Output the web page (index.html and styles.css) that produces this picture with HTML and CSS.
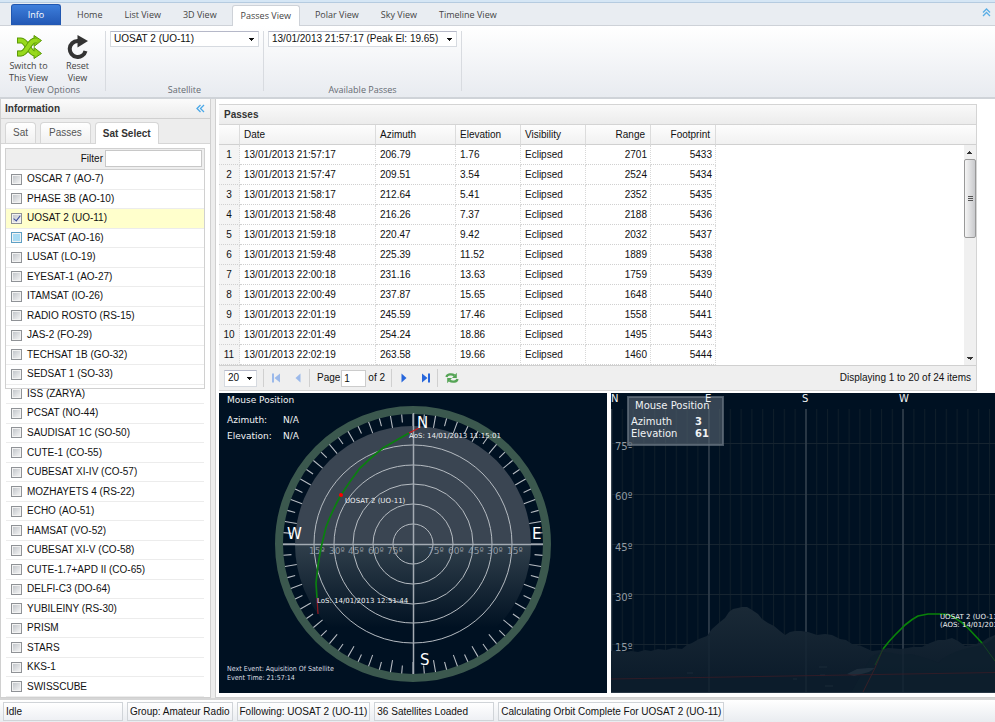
FILE: index.html
```html
<!DOCTYPE html>
<html lang="en">
<head>
<meta charset="utf-8">
<title>Passes View</title>
<link rel="stylesheet" href="styles.css">
</head>
<body>
<header class="ribbon">
  <nav class="ribbon-tabs">
    <button class="tab info">Info</button>
    <button class="tab">Home</button>
    <button class="tab">List View</button>
    <button class="tab">3D View</button>
    <button class="tab active">Passes View</button>
    <button class="tab">Polar View</button>
    <button class="tab">Sky View</button>
    <button class="tab">Timeline View</button>
    <button class="collapse" aria-label="Collapse ribbon"><svg width="9" height="9" viewBox="0 0 9 9"><path d="M1 4.5 4.5 1 8 4.5M1 8 4.500 4.500 8 8" fill="none" stroke="#5aaee6" stroke-width="1.300"/></svg></button>
  </nav>
  <div class="ribbon-body">
    <section class="group options">
      <div class="group-items">
        <button class="big">
          <svg width="26" height="24" viewBox="0 0 26 24"><g fill="none" stroke="#5c9a08" stroke-width="6"><path d="M1 5.500H5C11 5.500 13 18.500 19 18.500H20"/><path d="M1 18.500H5C11 18.500 13 5.500 19 5.500H20"/></g><path d="M18 .5 25.500 5.500 18 11.500ZM18 12.500 25.500 18.500 18 23.500Z" fill="#8fd014" stroke="#5c9a08"/><g fill="none" stroke="#98d91c" stroke-width="4"><path d="M2 5.500H5C11 5.500 13 18.500 19 18.500H21"/></g><path d="M2 18.500H5C11 18.500 13 5.500 19 5.500H21" fill="none" stroke="#5c9a08" stroke-width="5.500"/><path d="M2 18.500H5C11 18.500 13 5.500 19 5.500H21" fill="none" stroke="#98d91c" stroke-width="4"/></svg>
          <span>Switch to<br>This View</span>
        </button>
        <button class="big">
          <svg width="26" height="24" viewBox="0 0 26 24"><path d="M14 6H12.500A8 8 0 1 0 20.500 16" fill="none" stroke="#333" stroke-width="4"/><path d="M12.500 0 23 6 12.500 12.500Z" fill="#333"/></svg>
          <span>Reset<br>View</span>
        </button>
      </div>
      <h2>View Options</h2>
    </section>
    <section class="group satellite">
      <div class="group-items"><select class="combo" aria-label="Satellite"><option>UOSAT 2 (UO-11)</option></select></div>
      <h2>Satellite</h2>
    </section>
    <section class="group passes">
      <div class="group-items"><select class="combo" aria-label="Available Passes"><option>13/01/2013 21:57:17 (Peak El: 19.65)</option></select></div>
      <h2>Available Passes</h2>
    </section>
  </div>
</header>

<div class="workspace">
  <aside class="side">
    <div class="panel-title"><h1>Information</h1><button class="collapse-side" aria-label="Collapse panel"><svg width="9" height="9" viewBox="0 0 9 9"><path d="M4.500 1 1 4.500 4.500 8M8 1 4.500 4.500 8 8" fill="none" stroke="#4aa8e8" stroke-width="1.300"/></svg></button></div>
    <div class="side-tabs"><button>Sat</button><button>Passes</button><button class="active">Sat Select</button></div>
    <div class="select-box">
      <div class="filter"><label for="filter">Filter</label><input id="filter" type="text"></div>
      <div class="sat-list">
        <label><input type="checkbox">OSCAR 7 (AO-7)</label>
        <label><input type="checkbox">PHASE 3B (AO-10)</label>
        <label class="selected"><input type="checkbox" checked>UOSAT 2 (UO-11)</label>
        <label class="hot"><input type="checkbox">PACSAT (AO-16)</label>
        <label><input type="checkbox">LUSAT (LO-19)</label>
        <label><input type="checkbox">EYESAT-1 (AO-27)</label>
        <label><input type="checkbox">ITAMSAT (IO-26)</label>
        <label><input type="checkbox">RADIO ROSTO (RS-15)</label>
        <label><input type="checkbox">JAS-2 (FO-29)</label>
        <label><input type="checkbox">TECHSAT 1B (GO-32)</label>
        <label><input type="checkbox">SEDSAT 1 (SO-33)</label>
        <label><input type="checkbox">ISS (ZARYA)</label>
        <label><input type="checkbox">PCSAT (NO-44)</label>
        <label><input type="checkbox">SAUDISAT 1C (SO-50)</label>
        <label><input type="checkbox">CUTE-1 (CO-55)</label>
        <label><input type="checkbox">CUBESAT XI-IV (CO-57)</label>
        <label><input type="checkbox">MOZHAYETS 4 (RS-22)</label>
        <label><input type="checkbox">ECHO (AO-51)</label>
        <label><input type="checkbox">HAMSAT (VO-52)</label>
        <label><input type="checkbox">CUBESAT XI-V (CO-58)</label>
        <label><input type="checkbox">CUTE-1.7+APD II (CO-65)</label>
        <label><input type="checkbox">DELFI-C3 (DO-64)</label>
        <label><input type="checkbox">YUBILEINY (RS-30)</label>
        <label><input type="checkbox">PRISM</label>
        <label><input type="checkbox">STARS</label>
        <label><input type="checkbox">KKS-1</label>
        <label><input type="checkbox">SWISSCUBE</label>
      </div>
    </div>
  </aside>

  <main class="main">
    <section class="grid-panel">
      <div class="grid-title"><h1>Passes</h1></div>
      <div class="grid-body">
        <table>
          <colgroup><col class="c-num"><col class="c-date"><col class="c-az"><col class="c-std"><col class="c-std"><col class="c-std"><col class="c-std"><col></colgroup>
          <thead><tr><th></th><th>Date</th><th>Azimuth</th><th>Elevation</th><th>Visibility</th><th class="r">Range</th><th class="r">Footprint</th><th></th></tr></thead>
          <tbody>
            <tr><td>1</td><td>13/01/2013 21:57:17</td><td>206.79</td><td>1.76</td><td>Eclipsed</td><td class="r">2701</td><td class="r">5433</td><td></td></tr>
            <tr><td>2</td><td>13/01/2013 21:57:47</td><td>209.51</td><td>3.54</td><td>Eclipsed</td><td class="r">2524</td><td class="r">5434</td><td></td></tr>
            <tr><td>3</td><td>13/01/2013 21:58:17</td><td>212.64</td><td>5.41</td><td>Eclipsed</td><td class="r">2352</td><td class="r">5435</td><td></td></tr>
            <tr><td>4</td><td>13/01/2013 21:58:48</td><td>216.26</td><td>7.37</td><td>Eclipsed</td><td class="r">2188</td><td class="r">5436</td><td></td></tr>
            <tr><td>5</td><td>13/01/2013 21:59:18</td><td>220.47</td><td>9.42</td><td>Eclipsed</td><td class="r">2032</td><td class="r">5437</td><td></td></tr>
            <tr><td>6</td><td>13/01/2013 21:59:48</td><td>225.39</td><td>11.52</td><td>Eclipsed</td><td class="r">1889</td><td class="r">5438</td><td></td></tr>
            <tr><td>7</td><td>13/01/2013 22:00:18</td><td>231.16</td><td>13.63</td><td>Eclipsed</td><td class="r">1759</td><td class="r">5439</td><td></td></tr>
            <tr><td>8</td><td>13/01/2013 22:00:49</td><td>237.87</td><td>15.65</td><td>Eclipsed</td><td class="r">1648</td><td class="r">5440</td><td></td></tr>
            <tr><td>9</td><td>13/01/2013 22:01:19</td><td>245.59</td><td>17.46</td><td>Eclipsed</td><td class="r">1558</td><td class="r">5441</td><td></td></tr>
            <tr><td>10</td><td>13/01/2013 22:01:49</td><td>254.24</td><td>18.86</td><td>Eclipsed</td><td class="r">1495</td><td class="r">5443</td><td></td></tr>
            <tr><td>11</td><td>13/01/2013 22:02:19</td><td>263.58</td><td>19.66</td><td>Eclipsed</td><td class="r">1460</td><td class="r">5444</td><td></td></tr>
          </tbody>
        </table>
        <div class="scrollbar"><span class="up"></span><span class="thumb"></span><span class="down"></span></div>
      </div>
      <div class="pager">
        <select class="combo size" aria-label="Page size"><option>20</option></select>
        <i></i>
        <button aria-label="First page"><svg width="10" height="10" viewBox="0 0 10 10"><path d="M1 .5H3V9.500H1ZM9 .5V9.500L3.500 5Z" fill="#9bb9ea"/></svg></button>
        <button aria-label="Previous page"><svg width="10" height="10" viewBox="0 0 10 10"><path d="M7.500 .5V9.500L2.500 5Z" fill="#9bb9ea"/></svg></button>
        <i></i>
        <label for="page">Page</label><input id="page" type="text" value="1"><span>of 2</span>
        <i></i>
        <button aria-label="Next page"><svg width="10" height="10" viewBox="0 0 10 10"><path d="M2.500 .5V9.500L7.500 5Z" fill="#2767dc"/></svg></button>
        <button aria-label="Last page"><svg width="10" height="10" viewBox="0 0 10 10"><path d="M9 .5H7V9.500H9ZM1 .5V9.500L6.500 5Z" fill="#2767dc"/></svg></button>
        <i></i>
        <button aria-label="Refresh"><svg width="14" height="12" viewBox="0 0 14 12"><g fill="none" stroke="#55a455" stroke-width="2.300"><path d="M1.500 5C2 2 7 1.500 9.500 3.500"/><path d="M12.500 7C12 10 7 10.500 4.500 8.500"/></g><path d="M11.800 .8V6H7ZM2.200 11.200V6H7Z" fill="#55a455"/></svg></button>
        <span class="count">Displaying 1 to 20 of 24 items</span>
      </div>
    </section>
    <div class="views">
      <svg class="polar" viewBox="0 0 388 300" preserveAspectRatio="xMinYMin slice">
        <defs><linearGradient id="disc" gradientUnits="userSpaceOnUse" x1="0" y1="150" x2="0" y2="235"><stop offset="0" stop-color="#3a4552"/><stop offset=".02" stop-color="#303f4b"/><stop offset="1" stop-color="#001122"/></linearGradient></defs>
        <circle cx="194" cy="151" r="118" fill="url(#disc)"/>
        <circle cx="194" cy="151" r="134" fill="none" stroke="#3b584e" stroke-width="8"/>
        <g fill="none" stroke="#b6bcc2">
          <circle cx="194" cy="151" r="124" stroke-width="12" pathLength="360" stroke-dasharray=".5 9.500" stroke-dashoffset=".25"/>
          <circle cx="194" cy="151" r="126" stroke-width="8" pathLength="360" stroke-dasharray=".5 9.500" stroke-dashoffset="5.250"/>
          <circle cx="194" cy="151" r="20"/><circle cx="194" cy="151" r="40"/><circle cx="194" cy="151" r="60"/><circle cx="194" cy="151" r="79"/><circle cx="194" cy="151" r="99"/>
          <path d="M194.500 20V281M64 151.500H324" stroke-width="1.500" stroke="#a4abb3"/>
        </g>
        <g class="deg"><text x="90" y="161">15º</text><text x="110" y="161">30º</text><text x="129" y="161">45º</text><text x="149" y="161">60º</text><text x="168" y="161">75º</text><text x="209" y="161">75º</text><text x="229" y="161">60º</text><text x="249" y="161">45º</text><text x="268" y="161">30º</text><text x="288" y="161">15º</text></g>
        <path d="M190 40 164 55 153 64 141 75Q131 88 122 102 113 118 107 134L102 155 99 172 97 190 98 205" fill="none" stroke="#0a800f" stroke-width="1.700"/>
        <path d="M200 35 190 40" stroke="#d21c1c" stroke-width="1.200"/><path d="M98 205 99 221" stroke="#901820" stroke-width="1.300"/>
        <circle cx="122" cy="102" r="2" fill="#f00"/>
        <g class="compass"><text x="198" y="35">N</text><text x="201" y="272">S</text><text x="68" y="146">W</text><text x="313" y="146">E</text></g>
        <g class="tiny"><text x="190" y="45">AoS: 14/01/2013 11:15:01</text><text x="126" y="110">UOSAT 2 (UO-11)</text><text x="98" y="210">LoS: 14/01/2013 12:51:44</text></g>
        <g class="tiny event"><text x="8" y="278">Next Event: Aquisition Of Satellite</text><text x="8" y="287">Event Time: 21:57:14</text></g>
        <g class="info-text"><text x="8" y="10">Mouse Position</text><text x="8" y="30">Azimuth:</text><text x="64" y="30">N/A</text><text x="8" y="46">Elevation:</text><text x="64" y="46">N/A</text></g>
      </svg>
      <svg class="horizon" viewBox="0 0 384 300" preserveAspectRatio="xMinYMin slice">
        <defs>
          <pattern id="minor" patternUnits="userSpaceOnUse" width="10.800" height="300"><rect x="0" width="1" height="300" fill="#0f1e2a"/></pattern>
          <linearGradient id="land" gradientUnits="userSpaceOnUse" x1="0" y1="214" x2="0" y2="285"><stop offset="0" stop-color="#1a2936"/><stop offset="1" stop-color="#0c1c2b"/></linearGradient>
        </defs>
        <rect y="16" width="400" height="284" fill="url(#minor)"/>
        <path d="M0 50.500H400M0 101.500H400M0 151.500H400M0 201.500H400M0 251.500H400" stroke="#162430"/>
        <path d="M.5 16V300M98 16V300M195 16V300M292 16V300" stroke="#35424f" stroke-width="1.500"/>
        <g class="scale"><text x="4" y="57">75º</text><text x="4" y="107">60º</text><text x="4" y="158">45º</text><text x="4" y="208">30º</text></g>
        <path d="M0 258 6 257 14 259 20 258 27 259 34 257 40 258 47 256 55 257 62 255 71 256 76 252 81 250 88 246 96 243 101 236 109 229 114 225 118 219 122 216 127 215 131 214 136 214 141 217 147 221 151 226 157 230 163 233 169 238 174 242 179 239 184 238 190 238 197 239 206 242 214 241 221 242 229 246 235 247 241 251 250 253 261 258 270 257 277 255 290 256 302 254 311 254 319 250 327 247 334 247 341 245 347 248 354 253 362 252 371 249 377 245 384 242 400 238V300H0Z" fill="url(#land)"/>
        <path d="M240 300 254 275 261 263 270 259 281 260 290 262 300 261 311 264 320 267 327 270 333 265 340 261 347 258 357 255 367 253 376 250 384 244 400 240V300Z" fill="#0e1f2d" opacity=".8"/>
        <path d="M236 281 246 276 257 275 264 275 258 279 243 283Z" fill="#1d2d3b"/>
        <path d="M98 243V300M195 240V300M292 256V300" stroke="#1b2b38"/><path d="M208 274h8m-7 8h5m-32 4h4m-110-6h6m132 13h8" stroke="#1b2b38"/>
        <path d="M0 299.500H400" stroke="#293846"/>
        <path d="M0 286 384 279.500" stroke="#381c26" stroke-width=".8"/>
        <path d="M272 256 264 275 252 299" fill="none" stroke="#382027"/><path d="M272 256 264 272M371 250 384 268" fill="none" stroke="#154423"/>
        <path d="M272 256Q278 248 284 242L294 232Q301 226 307 223L317 221H331Q338 221 344 225 351 229 357 235L371 250" fill="none" stroke="#098309" stroke-width="1.700"/>
        <g class="scale"><text x="4" y="258">15º</text></g>
        <g class="tiny"><text x="329" y="226">UOSAT 2 (UO-11)</text><text x="329" y="234">(AOS: 14/01/2013 11:15:01)</text></g>
        <rect x="17" y="4" width="95" height="48" fill="#5a6875" fill-opacity=".6" stroke="#687581" stroke-opacity=".7" stroke-width="2"/>
        <g class="cardinal"><text x="0" y="9">N</text><text x="94" y="9">E</text><text x="191" y="9">S</text><text x="288" y="9">W</text></g>
        <g class="tip"><text x="24" y="16">Mouse Position</text><text x="20" y="32">Azimuth</text><text x="84" y="32" class="bold">3</text><text x="20" y="44">Elevation</text><text x="84" y="44" class="bold">61</text></g>
      </svg>
    </div>
  </main>
</div>
<footer class="status"><span class="wide">Idle</span><span>Group: Amateur Radio</span><span>Following: UOSAT 2 (UO-11)</span><span class="wide">36 Satellites Loaded</span><span>Calculating Orbit Complete For UOSAT 2 (UO-11)</span></footer>
</body>
</html>
```
FILE: styles.css
```css
* { box-sizing: border-box; }
body {
  margin: 0;
  min-height: 100vh;
  display: flex;
  flex-direction: column;
  overflow-x: hidden;
  background: #fff;
  color: #111;
  font: 10px/14px "Liberation Sans", Arial, sans-serif;
}
h1, h2 { margin: 0; font-size: 10px; }
button { border: 0; padding: 0; background: none; font: inherit; color: inherit; }
input, select { font: inherit; color: inherit; margin: 0; }
svg { display: block; }

.ribbon { font: 9px/12px "Open Sans", "Noto Sans", sans-serif; color: #444; border-top: 2px solid #d5e6f5; }
.ribbon-tabs {
  display: flex;
  align-items: flex-end;
  height: 24px;
  padding-left: 11px;
  border-top: 1px solid #b5cbe0;
  border-bottom: 1px solid #ced2d8;
  background: #e9edf2;
}
.tab { height: 20px; padding: 0 11px; border-radius: 3px 3px 0 0; }
.tab.info { height: 21px; width: 50px; margin-right: 5px; border: 1px solid #2057b0; border-bottom: 0; background: linear-gradient(#3d7edb, #2257b4); color: #fff; }
.tab.active { height: 21px; margin: 0 4px -1px; padding: 0 8px; border: 1px solid #ced2d8; border-bottom: 0; background: #fff; }
.collapse { margin: 0 4px 8px auto; }
.ribbon-body { display: flex; height: 73px; padding-top: 5px; border-bottom: 2px solid #cfd3d8; background: linear-gradient(#fff, #e8ebf0); }
.group { display: flex; flex-direction: column; height: 60px; border-right: 1px solid #d8dbe0; }
.group h2 { margin-bottom: -5px; font-size: 9px; font-weight: 400; text-align: center; color: #666b72; }
.group-items { display: flex; flex: 1; align-items: flex-start; }
.options { width: 106px; }
.options .group-items { padding: 4px 0 0 4px; }
.satellite { width: 158px; }
.passes { width: 198px; }
.satellite .group-items, .passes .group-items { padding: 0 4px; }
.big { display: flex; flex-direction: column; align-items: center; gap: 1px; width: 49px; }
.combo {
  appearance: none;
  width: 100%;
  height: 16px;
  padding: 0 3px;
  border: 1px solid #d6dae0;
  border-top-color: #b5b8c8;
  border-radius: 0;
  background: conic-gradient(from -50deg at 50% 100%, #111 100deg, transparent 100deg) right 3px center / 7px 3px no-repeat, #fff;
  background: conic-gradient(from 0deg at 50% 100%, #111 0 50deg, transparent 50deg 310deg, #111 310deg) right 3px center / 7px 3px no-repeat, #fff;
  color: #111;
  font: 10px/14px "Liberation Sans", Arial, sans-serif;
}

.workspace { flex: 1; display: flex; gap: 4px; background: #ededed; border-bottom: 2px solid #d6d6d6; }
.side { width: 211px; flex: none; display: flex; flex-direction: column; border: 1px solid #d0d0d0; border-top: 0; background: #fff; }
.panel-title { display: flex; justify-content: space-between; align-items: center; height: 20px; padding: 0 5px 0 4px; border-bottom: 1px solid #d0d0d0; background: linear-gradient(#fbfbfb, #ececec); color: #333; }
.side-tabs { display: flex; align-items: flex-end; gap: 4px; height: 25px; padding-left: 4px; background: #ededed; border-bottom: 1px solid #d6d6d6; color: #555; }
.side-tabs button { height: 21px; padding: 0 7px; border: 1px solid #d6d6d6; border-bottom: 0; border-radius: 4px 4px 0 0; background: linear-gradient(#fff, #f0f0f0); }
.side-tabs .active { height: 22px; margin-bottom: -1px; background: #fff; color: #333; font-weight: 700; }
.side-tabs button:nth-child(2) { padding: 0 8px; }
.select-box { position: relative; flex: 1; display: flex; flex-direction: column; margin: 4px 5px 0 4px; padding: 0 1px; }
.select-box::before { content: ""; position: absolute; inset: 0 0 auto; height: 239px; border: 1px solid #d0d0d0; pointer-events: none; }
.filter { display: flex; justify-content: flex-end; align-items: center; gap: 2px; height: 22px; padding-right: 2px; border-bottom: 1px solid #d0d0d0; background: #eee; }
.filter input { width: 97px; height: 17px; border: 1px solid #c8c8c8; }
.sat-list { flex: 1; display: grid; grid-auto-rows: 1fr; }
.sat-list label { display: flex; align-items: center; gap: 5px; padding-left: 5px; border-bottom: 1px solid #ececec; line-height: 12px; }
.sat-list input { appearance: none; width: 11px; height: 11px; border: 1px solid #8f9296; background: linear-gradient(135deg, #bcc0c5, #f8f8f8); box-shadow: inset 0 0 0 1px #f2f2f2; }
.sat-list .selected { background: #ffffcc; }
.sat-list .hot input { border-color: #5d9fc4; background: #a9dbf3; }
.sat-list input:checked { position: relative; }
.sat-list input:checked::after { content: ""; position: absolute; left: 3px; top: 0; width: 3px; height: 6px; border: solid #3a4c9c; border-width: 0 1px 1px 0; transform: rotate(38deg); }

.main { flex: 1; min-width: 0; padding: 5px 0 4px 3px; border: 1px solid #d0d0d0; border-width: 0 0 1px 1px; background: #fff; }
.grid-panel { margin: 0 18px 2px 0; border: 1px solid #d4d4d4; border-left: 0; }
.grid-title { height: 20px; padding: 3px 5px; border-bottom: 1px solid #d4d4d4; background: linear-gradient(#f9f9f9, #ececec); color: #333; }
.grid-title h1 { line-height: 14px; }
.grid-body { position: relative; height: 240px; overflow: hidden; }
table { width: 100%; table-layout: fixed; border-collapse: separate; border-spacing: 0; }
.c-num { width: 21px; }
.c-date { width: 136px; }
.c-az { width: 80px; }
.c-std { width: 65px; }
th, td { height: 20px; padding: 0 4px; font-weight: 400; text-align: left; line-height: 14px; border-right: 1px dotted #d8d8d8; }
th { border-right: 1px solid #dcdcdc; border-bottom: 1px solid #d0d0d0; background: linear-gradient(#fdfdfd, #f1f1f1); }
td { border-bottom: 1px dotted #d0d0d0; }
td:first-child { padding: 0; text-align: center; background: #f4f4f4; }
th:last-child { border-right: 0; }
td:last-child { border: 0; }
.r { text-align: right; }
th.r { padding-right: 5px; }
td.r { padding-right: 3px; }
.scrollbar { position: absolute; top: 20px; right: 0; bottom: 0; width: 12px; display: flex; flex-direction: column; background: #f0f0f0; }
.scrollbar .up { height: 14px; background: conic-gradient(from 135deg at 50% 0, #333 90deg, transparent 90deg) center / 6px 3px no-repeat; }
.scrollbar .thumb { height: 79px; border: 1px solid #999; border-radius: 2px; background: linear-gradient(#555, #555) center 36px / 5px 1px no-repeat, linear-gradient(#555, #555) center 38px / 5px 1px no-repeat, linear-gradient(#555, #555) center 40px / 5px 1px no-repeat, linear-gradient(90deg, #f5f5f5, #c8c9cc); }
.scrollbar .down { height: 14px; margin-top: auto; background: conic-gradient(from -45deg at 50% 100%, #333 90deg, transparent 90deg) center / 6px 3px no-repeat; }
.pager { display: flex; align-items: center; height: 25px; padding: 0 5px; border-top: 1px solid #d0d0d0; background: #efefef; }
.pager .size { width: 33px; height: 17px; }
.pager i { width: 1px; height: 18px; margin: 0 7px 0 6px; background: #d0d0d0; }
.pager button + button { margin-left: 12px; }
.pager input { width: 25px; height: 17px; margin: 0 2px 0 1px; padding: 0 2px; border: 1px solid #ccc; }
.count { margin-left: auto; }

.views { display: grid; grid-template-columns: 388fr 384fr; gap: 4px; }
.views svg { width: 100%; height: 300px; background: #001122; }
.views text { font-family: "DejaVu Sans", Verdana, sans-serif; fill: #f0f2f4; }
.views .info-text text { font-size: 9px; }
.views .tiny text { font-size: 7px; }
.views .event text { font-family: "DejaVu Sans Condensed", "DejaVu Sans", sans-serif; fill: #dcdfe2; }
.views .compass text { font-size: 15px; fill: #fff; }
.views .deg text { font-size: 9px; fill: #8f979f; }
.views .scale text { font-size: 10px; fill: #929ba3; }
.views .cardinal text, .views .tip text { font-size: 10px; }
.views .tip .bold { font-weight: 700; }

.status { display: flex; align-items: center; gap: 4px; height: 22px; padding: 0 3px; background: linear-gradient(#fff, #e9ecf0); }
.status span { height: 19px; padding: 2px; border: 1px solid #d0d4d8; background: linear-gradient(#fff, #eef0f4); white-space: nowrap; }
.status .wide { width: 120px; }
```
